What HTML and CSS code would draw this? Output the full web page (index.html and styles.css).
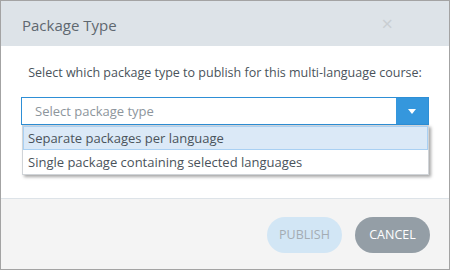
FILE: index.html
```html
<!DOCTYPE html>
<html lang="en">
<head>
  <meta charset="UTF-8" />
  <title>Package Type</title>
  <link rel="stylesheet" href="styles.css">
</head>
<body>
  <div class="dialog">
    <div class="dialog-header">
      <h2>Package Type</h2>
      <span class="close">&times;</span>
    </div>

    <div class="dialog-body">
      <p class="prompt">Select which package type to publish for this multi-language course:</p>

      <div class="select">
        <div class="select-box">
          <span class="placeholder">Select package type</span>
          <span class="select-btn">
            <svg width="8" height="5" viewBox="0 0 8 5"><path d="M0 0h8L4 5z" fill="#fff"/></svg>
          </span>
        </div>
        <ul class="options">
          <li class="option hover">Separate packages per language</li>
          <li class="option">Single package containing selected languages</li>
        </ul>
      </div>
    </div>

    <div class="dialog-footer">
      <button class="btn btn-publish" disabled>PUBLISH</button>
      <button class="btn btn-cancel">CANCEL</button>
    </div>
  </div>
</body>
</html>
```

FILE: styles.css
```css
* {
  margin: 0;
  padding: 0;
  box-sizing: border-box;
}

body {
  font-family: 'Open Sans', sans-serif;
  background: #fff;
}

.dialog {
  width: 450px;
  height: 270px;
  border: 1px solid #a3a3a3;
  display: flex;
  flex-direction: column;
}

.dialog-header {
  height: 45px;
  background: #dde3e8;
  display: flex;
  align-items: center;
  justify-content: space-between;
  padding: 0 56px 0 21px;
}

.dialog-header h2 {
  font-weight: normal;
  font-size: 15px;
  color: #5f6870;
  margin-top: 2px;
}

.close {
  color: #c9ced2;
  font-size: 20px;
  line-height: 1;
}

.dialog-body {
  height: 152px;
  padding: 18px 20px 0 20px;
  background: #fff;
}

.prompt {
  font-size: 12.5px;
  color: #4a535b;
  text-align: center;
  margin-bottom: 16px;
}

.select {
  position: relative;
}

.select-box {
  height: 28px;
  border: 1px solid #2e8fd6;
  display: flex;
  align-items: center;
  justify-content: space-between;
}

.placeholder {
  font-size: 13px;
  color: #8d959c;
  padding-left: 13px;
}

.select-btn {
  width: 32px;
  height: 100%;
  background: #3597dd;
  display: flex;
  align-items: center;
  justify-content: center;
}

.options {
  list-style: none;
  position: absolute;
  left: 1px;
  right: 0;
  top: 28px;
  background: #fff;
  border: 1px solid #d0d4d8;
  box-shadow: 2px 2px 3px rgba(0, 0, 0, 0.35);
}

.option {
  height: 24px;
  line-height: 22px;
  font-size: 13px;
  color: #4a535b;
  padding-left: 4px;
  border: 1px solid transparent;
}

.option.hover {
  background: #dbe9f7;
  border-color: #a9d0f3;
}

.dialog-footer {
  flex: 1;
  background: #f4f4f4;
  border-top: 1px solid #dde3e8;
  display: flex;
  justify-content: flex-end;
  align-items: center;
  gap: 13px;
  padding: 0 19px 0 0;
}

.btn {
  width: 75px;
  height: 36px;
  border: none;
  border-radius: 18px;
  font-family: 'Open Sans', sans-serif;
  font-size: 12.5px;
  margin-top: 1px;
}

.btn-publish {
  background: #d2e6f5;
  color: #a4acb3;
}

.btn-cancel {
  background: #949ea6;
  color: #fff;
  cursor: pointer;
}
```
